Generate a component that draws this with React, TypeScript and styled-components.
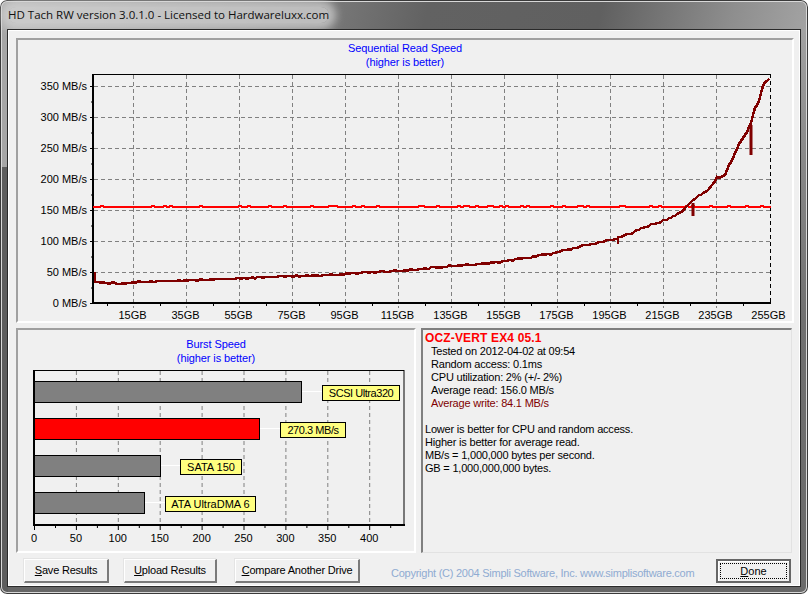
import React from 'react';
import styled, {createGlobalStyle} from "styled-components";

const GlobalStyle = createGlobalStyle`
  html, body {
    margin: 0;
    padding: 0;
    background: #fff;
  }
  * {
    box-sizing: border-box;
  }
`;

const UI_FONT = `"Liberation Sans", Arial, sans-serif`;

const seqLabels = [350, 300, 250, 200, 150, 100, 50, 0];
const gbLabels = [15, 35, 55, 75, 95, 115, 135, 155, 175, 195, 215, 235, 255];
const burstTicks = [0, 50, 100, 150, 200, 250, 300, 350, 400];

const yFor = (i: number) => 86 + i * 31;
const xForGb = (i: number) => 133.5 + i * 53;
const xForBurst = (i: number) => 34 + i * 41.9;

// rough trace of the read curve, page coordinates
const readKeys: [number, number][] = [
  [95, 282], [125, 284], [135, 282], [200, 280], [300, 276], [343, 274], [410, 270], [450, 266],
  [500, 262], [550, 254], [600, 242], [620, 238], [642, 228], [657, 223], [670, 218],
  [680, 213], [688, 205], [697, 197], [703, 193], [710, 188], [717, 178], [725, 175],
  [728, 167], [733, 158], [740, 142], [747, 132], [752, 120], [754, 110], [760, 100],
  [761, 92], [764, 83], [768, 81], [770, 76],
];

const noise = (x: number) => {
  const v = Math.sin(x * 12.9898) * 43758.5453;
  return v - Math.floor(v);
};

const buildReadLine = () => {
  const pts: string[] = [];
  for (let x = 95; x <= 770; x += 2) {
    const k = readKeys.findIndex(p => p[0] >= x);
    const b = readKeys[Math.max(k, 1)];
    const a = readKeys[Math.max(k, 1) - 1];
    const y = a[1] + (b[1] - a[1]) * (x - a[0]) / (b[0] - a[0]);
    pts.push(`${x},${Math.round(y + (noise(x) - .5) * 1.6)}`);
  }
  return pts.join(" ");
};

const buildWriteLine = () => {
  const pts: string[] = [];
  for (let x = 93; x <= 771; x += 3) {
    pts.push(`${x},${noise(x + 7) > .8 ? 206 : 207}`);
  }
  return pts.join(" ");
};

const bars = [
  {right: 301, top: 381, fill: "#808080", label: "SCSI Ultra320", lx: 322, lw: 78, tight: -.45},
  {right: 259, top: 418, fill: "#ff0000", label: "270.3 MB/s", lx: 280, lw: 66, tight: -.45},
  {right: 160, top: 455, fill: "#808080", label: "SATA 150", lx: 180, lw: 62, tight: 0},
  {right: 144, top: 492, fill: "#808080", label: "ATA UltraDMA 6", lx: 165, lw: 91, tight: 0},
];

function SequentialChart() {
  return (
      <svg width={774} height={252} viewBox="18 69 774 252" style={{display: "block"}}>
        {seqLabels.map((v, i) => (
            <g key={v}>
              <line x1={90} x2={93} y1={yFor(i) + .5} y2={yFor(i) + .5} stroke="#000"/>
              {i > 0 && <line x1={91} x2={93} y1={yFor(i) - 15} y2={yFor(i) - 15} stroke="#000"/>}
              {v > 0 && <Grid x1={94} x2={770} y1={yFor(i) + .5} y2={yFor(i) + .5}/>}
              <AxisText x={87} y={yFor(i) + 4} textAnchor="end">{v} MB/s</AxisText>
            </g>
        ))}
        {gbLabels.map((v, i) => (
            <g key={v}>
              {i < 12 && <Grid x1={xForGb(i)} x2={xForGb(i)} y1={75} y2={308}/>}
              <line x1={xForGb(i) - 26} x2={xForGb(i) - 26} y1={303} y2={306} stroke="#000"/>
              <AxisText x={xForGb(i) - 1} y={319} textAnchor="middle">{v}GB</AxisText>
            </g>
        ))}
        <line x1={770.5} x2={770.5} y1={74} y2={303} stroke="#000" strokeDasharray="4 3"/>
        <line x1={93} x2={771} y1={74.5} y2={74.5} stroke="#000"/>
        <line x1={93} x2={93} y1={74} y2={304} stroke="#000" strokeWidth={2}/>
        <line x1={92} x2={771} y1={303} y2={303} stroke="#000" strokeWidth={2}/>
        <Trace points={buildWriteLine()} stroke="#ff0000" $weight={2}/>
        <Trace points={buildReadLine()} stroke="#800000" $weight={2.6}/>
        <line x1={95} x2={95} y1={272} y2={283} stroke="#800000" strokeWidth={2}/>
        <line x1={751} x2={751} y1={125} y2={155} stroke="#800000" strokeWidth={3}/>
        <line x1={693} x2={693} y1={203} y2={216} stroke="#800000" strokeWidth={3}/>
        <line x1={618} x2={618} y1={236} y2={244} stroke="#800000" strokeWidth={2}/>
      </svg>
  );
}

function BurstChart() {
  return (
      <svg width={396} height={186} viewBox="18 365 396 186" style={{display: "block"}}>
        {burstTicks.map((v, i) => (
            <g key={v}>
              {i > 0 && <Grid x1={xForBurst(i) + .5} x2={xForBurst(i) + .5} y1={371} y2={525}/>}
              <line x1={xForBurst(i) + .5} x2={xForBurst(i) + .5} y1={525} y2={530} stroke="#000"/>
              <line x1={xForBurst(i) + 21.5} x2={xForBurst(i) + 21.5} y1={525} y2={528} stroke="#000"/>
              <AxisText x={xForBurst(i)} y={542} textAnchor="middle">{v}</AxisText>
            </g>
        ))}
        <rect x={34} y={370.5} width={370} height={154} fill="none" stroke="#000"/>
        <line x1={34} x2={34} y1={370} y2={526} stroke="#000" strokeWidth={2}/>
        <line x1={33} x2={405} y1={525} y2={525} stroke="#000" strokeWidth={2}/>
        {bars.map(b => (
            <g key={b.label}>
              <line x1={b.right} x2={b.lx} y1={b.top + 10.5} y2={b.top + 10.5} stroke="#fff"/>
              <rect x={34.5} y={b.top + .5} width={b.right - 34} height={21} fill={b.fill} stroke="#000"/>
              <rect x={b.lx + .5} y={b.top + 4.5} width={b.lw - 1} height={15} fill="#ffff80" stroke="#000"/>
              <AxisText x={b.lx + b.lw / 2} y={b.top + 16} textAnchor="middle" letterSpacing={b.tight}>{b.label}</AxisText>
            </g>
        ))}
      </svg>
  );
}

function App() {
  return (
      <>
        <GlobalStyle/>
        <Window>
          <TitleBar>
            <TitleText>HD Tach RW version 3.0.1.0 - Licensed to Hardwareluxx.com</TitleText>
          </TitleBar>
          <Client>
            <SunkenPanel>
              <ChartTitle $top={1}>
                Sequential Read Speed<br/>(higher is better)
              </ChartTitle>
              <SequentialChart/>
            </SunkenPanel>
            <LowerRow>
              <SunkenPanel>
                <ChartTitle $top={7}>
                  Burst Speed<br/>(higher is better)
                </ChartTitle>
                <BurstChart/>
              </SunkenPanel>
              <InfoPanel>
                <DriveName>OCZ-VERT EX4 05.1</DriveName>
                <InfoLine $indent>Tested on 2012-04-02 at 09:54</InfoLine>
                <InfoLine $indent>Random access: 0.1ms</InfoLine>
                <InfoLine $indent>CPU utilization: 2% (+/- 2%)</InfoLine>
                <InfoLine $indent>Average read: 156.0 MB/s</InfoLine>
                <InfoLine $indent $write>Average write: 84.1 MB/s</InfoLine>
                <InfoSpacer/>
                <InfoLine>Lower is better for CPU and random access.</InfoLine>
                <InfoLine>Higher is better for average read.</InfoLine>
                <InfoLine>MB/s = 1,000,000 bytes per second.</InfoLine>
                <InfoLine>GB = 1,000,000,000 bytes.</InfoLine>
              </InfoPanel>
            </LowerRow>
            <ButtonRow>
              <Button $width={85} $gap={15}><u>S</u>ave Results</Button>
              <Button $width={93} $gap={18}><u>U</u>pload Results</Button>
              <Button $width={125} $gap={31}><u>C</u>ompare Another Drive</Button>
              <Copyright>Copyright (C) 2004 Simpli Software, Inc. www.simplisoftware.com</Copyright>
              <DoneButton>
                <DoneFocus><u>D</u>one</DoneFocus>
              </DoneButton>
            </ButtonRow>
          </Client>
        </Window>
      </>
  );
}

const Window = styled.div`
  width: 808px;
  height: 594px;
  display: flex;
  flex-direction: column;
  padding: 0 8px 8px;
  border-radius: 7px;
  box-shadow: inset 0 0 0 1px #3a3a3a, inset 0 0 0 2px #d8d8d8;
  background:
    linear-gradient(102deg, #b0b0b0 0, #8a8a8a 250px, #626262 420px, #606060 590px, #8e8e8e 720px, #a6a6a6 808px) top / 100% 30px no-repeat,
    linear-gradient(#a6a6a6 0, #a6a6a6 167px, #5e5e5e 167px, #5e5e5e 100%) left / 8px 100% no-repeat,
    linear-gradient(#a8a8a8 0, #8a8a8a 150px, #707070 320px, #6a6a6a 100%) right / 8px 100% no-repeat,
    #666;
`;

const TitleBar = styled.div`
  height: 30px;
  flex: none;
  display: flex;
  align-items: flex-start;
`;

const TitleText = styled.span`
  margin-top: 7px;
  font: 11.5px/16px "Open Sans", ${UI_FONT};
  color: #101010;
  white-space: nowrap;
  background: rgba(214, 214, 214, .72);
  box-shadow: 0 0 9px 7px rgba(214, 214, 214, .72);
  border-radius: 8px;
`;

const Client = styled.div`
  flex: 1;
  display: flex;
  flex-direction: column;
  gap: 5px;
  padding: 8px 6px 3px 8px;
  background: #f0f0f0;
  box-shadow: 0 0 0 1px #2a2a2a, inset 1px 1px 0 #fff, inset -1px -1px 0 #fff;
`;

const SunkenPanel = styled.div`
  border-style: solid;
  border-width: 2px;
  border-color: #a0a0a0 #fff #fff #a0a0a0;
`;

const ChartTitle = styled.div<{ $top: number }>`
  padding-top: ${p => p.$top}px;
  text-align: center;
  font: 11px/14px ${UI_FONT};
  letter-spacing: -.1px;
  color: #0000ff;
`;

const Grid = styled.line`
  stroke: #808080;
  stroke-dasharray: 4 3;
`;

const AxisText = styled.text`
  font: 11px ${UI_FONT};
  fill: #000;
`;

const Trace = styled.polyline<{ $weight: number }>`
  fill: none;
  stroke-width: ${p => p.$weight};
  shape-rendering: crispEdges;
`;

const LowerRow = styled.div`
  display: grid;
  grid-template-columns: 400px 1fr;
  gap: 5px;
`;

const InfoPanel = styled.div`
  margin-right: 2px;
  padding: 1px 2px 0;
  border-style: solid;
  border-width: 2px 1px 1px 2px;
  border-color: #808080 #e2e2e2 #e2e2e2 #808080;
  font: 11px/13px ${UI_FONT};
  letter-spacing: -.2px;
  color: #000;
`;

const DriveName = styled.div`
  font: bold 12px/14px ${UI_FONT};
  letter-spacing: .15px;
  color: #ff0000;
`;

const InfoLine = styled.div<{ $indent?: boolean; $write?: boolean }>`
  padding-left: ${p => (p.$indent ? 6 : 0)}px;
  color: ${p => (p.$write ? "#800000" : "#000")};
  white-space: nowrap;
`;

const InfoSpacer = styled.div`
  height: 13px;
`;

const ButtonRow = styled.div`
  margin-top: 1px;
  height: 24px;
  display: flex;
  align-items: stretch;
  padding: 0 3px 0 8px;
`;

const Button = styled.button<{ $width: number; $gap: number }>`
  flex: none;
  width: ${p => p.$width}px;
  margin-right: ${p => p.$gap}px;
  padding: 0 0 2px;
  background: #f0f0f0;
  border-style: solid;
  border-width: 1px 2px 2px 1px;
  border-color: #fff #7a7a7a #7a7a7a #fff;
  box-shadow: -1px -1px 0 #e4e4e4;
  font: 11px ${UI_FONT};
  letter-spacing: -.2px;
  color: #000;
  white-space: nowrap;
`;

const Copyright = styled.div`
  align-self: center;
  padding-top: 4px;
  font: 11px/14px ${UI_FONT};
  letter-spacing: -.25px;
  color: #8fabd2;
  white-space: nowrap;
`;

const DoneButton = styled.button`
  flex: none;
  margin-left: auto;
  width: 75px;
  padding: 2px;
  background: #f0f0f0;
  border: 2px solid #666;
  box-shadow: inset 1px 1px 0 #fff;
  font: 11px ${UI_FONT};
  color: #000;
  display: flex;
`;

const DoneFocus = styled.span`
  flex: 1;
  display: flex;
  align-items: center;
  justify-content: center;
  border: 1px dotted #000;

  u {
    text-decoration: underline;
  }
`;

export default App;
